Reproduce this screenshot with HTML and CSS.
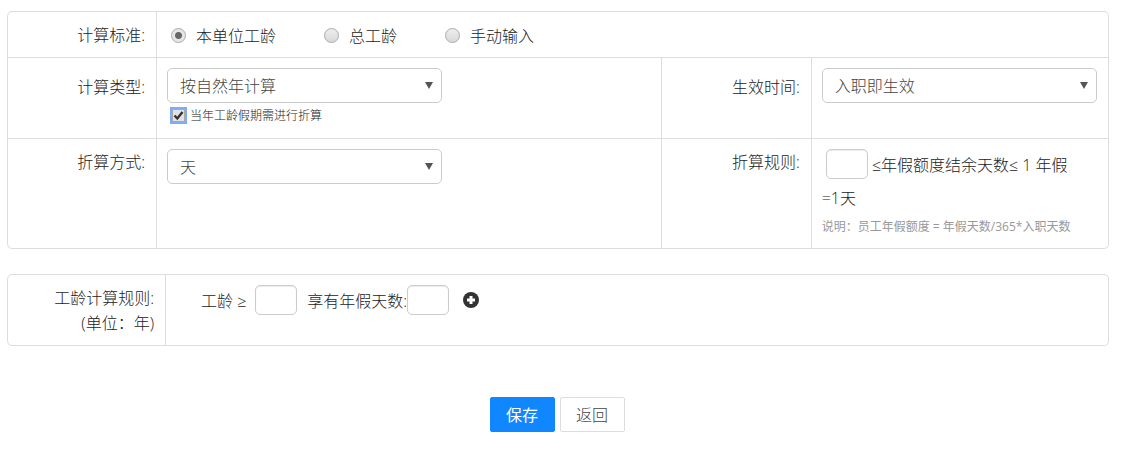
FILE: index.html
```
<!DOCTYPE html>
<html lang="zh-CN">

<head>
    <meta charset="UTF-8">
    <title>年假规则设置</title>
    <meta name="viewport" content="width=device-width,initial-scale=1">
    <link rel="stylesheet" href="styles.css">
</head>

<body>
    <form class="rule-form">
        <table class="table-form">
            <colgroup>
                <col class="col-main">
                <col>
                <col class="col-label">
                <col class="col-side">
            </colgroup>
            <tr>
                <th scope="row">计算标准:</th>
                <td colspan="3">
                    <div class="radios">
                        <label><input type="radio" name="standard" checked>本单位工龄</label>
                        <label><input type="radio" name="standard">总工龄</label>
                        <label><input type="radio" name="standard">手动输入</label>
                    </div>
                </td>
            </tr>
            <tr class="row-type">
                <th scope="row"><label for="calcType">计算类型:</label></th>
                <td>
                    <div class="select">
                        <select id="calcType">
                            <option>按自然年计算</option>
                        </select>
                    </div>
                    <label class="check"><input type="checkbox" checked>当年工龄假期需进行折算</label>
                </td>
                <th scope="row"><label for="effectTime">生效时间:</label></th>
                <td>
                    <div class="select">
                        <select id="effectTime">
                            <option>入职即生效</option>
                        </select>
                    </div>
                </td>
            </tr>
            <tr>
                <th scope="row"><label for="convertType">折算方式:</label></th>
                <td>
                    <div class="select">
                        <select id="convertType">
                            <option>天</option>
                        </select>
                    </div>
                </td>
                <th scope="row"><label for="convertMin">折算规则:</label></th>
                <td>
                    <div class="rule">
                        <input id="convertMin" class="num num-rule" type="text">
                        ≤年假额度结余天数≤ 1 年假<br>=1天
                    </div>
                    <p class="note">说明：员工年假额度 = 年假天数/365*入职天数</p>
                </td>
            </tr>
        </table>

        <table class="table-form">
            <colgroup>
                <col class="col-years">
                <col>
            </colgroup>
            <tr>
                <th scope="row">工龄计算规则:<br>(单位：年)</th>
                <td>
                    <div class="years">
                        <label for="years">工龄 ≥</label>
                        <input id="years" class="num" type="text">
                        <label for="days">享有年假天数:</label>
                        <input id="days" class="num" type="text">
                        <button class="add" type="button" aria-label="添加">
                            <svg width="16" height="16" viewBox="0 0 16 16">
                                <circle cx="8" cy="8" r="8" fill="#333" />
                                <path d="M6.500 4h3v2.500h2.500v3H9.500V12h-3V9.500H4v-3h2.500z" fill="#fff" />
                            </svg>
                        </button>
                    </div>
                </td>
            </tr>
        </table>

        <div class="actions">
            <button class="btn btn-primary" type="submit">保存</button>
            <button class="btn" type="button">返回</button>
        </div>
    </form>
</body>

</html>
```
FILE: styles.css
```
* {
    box-sizing: border-box;
    margin: 0;
    padding: 0;
}

body {
    font-family: "Open Sans", "Noto Sans", "Noto Sans CJK SC", sans-serif;
    font-size: 16px;
    line-height: 25px;
    color: #222;
    background-color: #fff;
}

input,
select,
button {
    font: inherit;
    color: inherit;
}

.rule-form {
    padding: 11px 13px 18px 7px;
}

/* tables */
.table-form {
    width: 100%;
    table-layout: fixed;
    border: 1px solid #ddd;
    border-left: 0;
    border-radius: 5px;
    border-spacing: 0;
    margin-bottom: 25px;
}

.table-form th,
.table-form td {
    padding: 10px;
    border-left: 1px solid #ddd;
    font-weight: 300;
    vertical-align: top;
}

.table-form th {
    padding: 11px 11px 9px 10px;
    text-align: right;
}

.table-form tr:first-child th:first-child {
    border-top-left-radius: 5px;
}

.table-form tr:last-child th:first-child {
    border-bottom-left-radius: 5px;
}

.table-form tr + tr > * {
    border-top: 1px solid #ddd;
}

.table-form .row-type th {
    padding-top: 17px;
}

.col-main {
    width: 149px;
}

.col-label {
    width: 150px;
}

.col-side {
    width: 27%;
}

.col-years {
    width: 158px;
}

/* controls */
.radios {
    display: flex;
    gap: 48px;
    padding-left: 4px;
    line-height: 26px;
    height: 25px;
}

.radios label {
    display: flex;
    align-items: center;
    gap: 10px;
    height: 27px;
}

input[type=radio] {
    appearance: none;
    width: 15px;
    height: 15px;
    border: 1px solid #aaa;
    border-radius: 50%;
    background: linear-gradient(#eee, #d8d8d8);
}

input[type=radio]:checked {
    background: radial-gradient(circle, #666 3px, #e6e6e6 4px);
}

.select {
    position: relative;
    width: 275px;
    max-width: 100%;
}

.select::after {
    content: "";
    position: absolute;
    top: 14px;
    right: 9px;
    border: solid transparent;
    border-width: 7px 4px 0;
    border-top-color: #555;
    pointer-events: none;
}

select {
    display: block;
    appearance: none;
    width: 100%;
    height: 35px;
    padding: 2px 12px 0;
    border: 1px solid #ccc;
    border-radius: 5px;
    background-color: #fff;
    color: #444;
}

.check {
    display: flex;
    align-items: center;
    gap: 5px;
    padding-left: 5px;
    font-size: 12px;
}

input[type=checkbox] {
    appearance: none;
    width: 13px;
    height: 13px;
    border: 1px solid #aaa;
    outline: 2px solid #7eacf6;
    background: #e2e2e2 url('data:image/svg+xml,<svg xmlns="http://www.w3.org/2000/svg" viewBox="0 0 11 11"><path d="M1.500 5.500l2.800 3L9.500 2" fill="none" stroke="%23333" stroke-width="2.400"/></svg>');
}

.num {
    width: 42px;
    height: 30px;
    padding: 0 5px;
    border: 1px solid #ccc;
    border-radius: 5px;
    box-shadow: inset 0 1px 1px rgba(0, 0, 0, .08);
    vertical-align: top;
}

.rule {
    line-height: 33px;
}

.num-rule {
    margin-left: 4px;
}

.note {
    font-size: 12px;
    font-weight: 400;
    line-height: 23px;
    color: #999;
}

.years {
    display: flex;
    align-items: flex-start;
    padding-left: 25px;
    line-height: 33px;
}

#years {
    margin: 0 10px 0 9px;
}

.add {
    height: 30px;
    margin-left: 14px;
    border: 0;
    background: none;
    cursor: pointer;
}

.add svg {
    display: block;
}

/* buttons */
.actions {
    display: flex;
    justify-content: center;
    gap: 5px;
    padding: 26px 2px 0 0;
}

.btn {
    width: 65px;
    height: 35px;
    padding-top: 1px;
    border: 1px solid #ddd;
    border-radius: 2px;
    background-color: #fff;
    font-weight: 300;
    color: #444;
    cursor: pointer;
}

.btn-primary {
    border-color: #1087ff;
    background-color: #1087ff;
    font-weight: 400;
    color: #fff;
}
```
